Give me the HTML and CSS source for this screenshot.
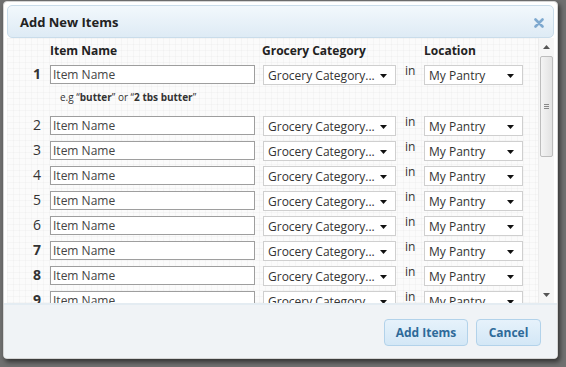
FILE: index.html
```html
<!DOCTYPE html>
<html>
<head>
<meta charset="utf-8">
<link rel="stylesheet" href="styles.css">
</head>
<body>
<div class="dialog">
  <div class="titlebar">
    <span class="title">Add New Items</span>
    <svg class="close" width="10" height="10" viewBox="0 0 10 10"><path d="M1.5 1.5 L8.5 8.5 M8.5 1.5 L1.5 8.5" stroke="#7ea9cf" stroke-width="2.6" stroke-linecap="round"/></svg>
  </div>
  <div class="content">
    <div class="viewport">
      <div class="head">
        <span class="h-name">Item Name</span>
        <span class="h-cat">Grocery Category</span>
        <span class="h-loc">Location</span>
      </div>
      <div class="row">
        <span class="num bold">1</span>
        <input class="name" type="text" placeholder="Item Name">
        <div class="select cat"><span>Grocery Category...</span><svg width="7" height="4" viewBox="0 0 7 4"><path d="M0 0 H7 L3.5 4 Z" fill="#111"/></svg></div>
        <span class="in">in</span>
        <div class="select loc"><span>My Pantry</span><svg width="7" height="4" viewBox="0 0 7 4"><path d="M0 0 H7 L3.5 4 Z" fill="#111"/></svg></div>
      </div>
      <div class="hint">e.g “<b>butter</b>” or “<b>2 tbs butter</b>”</div>
      <div class="row">
        <span class="num">2</span>
        <input class="name" type="text" placeholder="Item Name">
        <div class="select cat"><span>Grocery Category...</span><svg width="7" height="4" viewBox="0 0 7 4"><path d="M0 0 H7 L3.5 4 Z" fill="#111"/></svg></div>
        <span class="in">in</span>
        <div class="select loc"><span>My Pantry</span><svg width="7" height="4" viewBox="0 0 7 4"><path d="M0 0 H7 L3.5 4 Z" fill="#111"/></svg></div>
      </div>
      <div class="row">
        <span class="num">3</span>
        <input class="name" type="text" placeholder="Item Name">
        <div class="select cat"><span>Grocery Category...</span><svg width="7" height="4" viewBox="0 0 7 4"><path d="M0 0 H7 L3.5 4 Z" fill="#111"/></svg></div>
        <span class="in">in</span>
        <div class="select loc"><span>My Pantry</span><svg width="7" height="4" viewBox="0 0 7 4"><path d="M0 0 H7 L3.5 4 Z" fill="#111"/></svg></div>
      </div>
      <div class="row">
        <span class="num">4</span>
        <input class="name" type="text" placeholder="Item Name">
        <div class="select cat"><span>Grocery Category...</span><svg width="7" height="4" viewBox="0 0 7 4"><path d="M0 0 H7 L3.5 4 Z" fill="#111"/></svg></div>
        <span class="in">in</span>
        <div class="select loc"><span>My Pantry</span><svg width="7" height="4" viewBox="0 0 7 4"><path d="M0 0 H7 L3.5 4 Z" fill="#111"/></svg></div>
      </div>
      <div class="row">
        <span class="num">5</span>
        <input class="name" type="text" placeholder="Item Name">
        <div class="select cat"><span>Grocery Category...</span><svg width="7" height="4" viewBox="0 0 7 4"><path d="M0 0 H7 L3.5 4 Z" fill="#111"/></svg></div>
        <span class="in">in</span>
        <div class="select loc"><span>My Pantry</span><svg width="7" height="4" viewBox="0 0 7 4"><path d="M0 0 H7 L3.5 4 Z" fill="#111"/></svg></div>
      </div>
      <div class="row">
        <span class="num">6</span>
        <input class="name" type="text" placeholder="Item Name">
        <div class="select cat"><span>Grocery Category...</span><svg width="7" height="4" viewBox="0 0 7 4"><path d="M0 0 H7 L3.5 4 Z" fill="#111"/></svg></div>
        <span class="in">in</span>
        <div class="select loc"><span>My Pantry</span><svg width="7" height="4" viewBox="0 0 7 4"><path d="M0 0 H7 L3.5 4 Z" fill="#111"/></svg></div>
      </div>
      <div class="row">
        <span class="num bold">7</span>
        <input class="name" type="text" placeholder="Item Name">
        <div class="select cat"><span>Grocery Category...</span><svg width="7" height="4" viewBox="0 0 7 4"><path d="M0 0 H7 L3.5 4 Z" fill="#111"/></svg></div>
        <span class="in">in</span>
        <div class="select loc"><span>My Pantry</span><svg width="7" height="4" viewBox="0 0 7 4"><path d="M0 0 H7 L3.5 4 Z" fill="#111"/></svg></div>
      </div>
      <div class="row">
        <span class="num bold">8</span>
        <input class="name" type="text" placeholder="Item Name">
        <div class="select cat"><span>Grocery Category...</span><svg width="7" height="4" viewBox="0 0 7 4"><path d="M0 0 H7 L3.5 4 Z" fill="#111"/></svg></div>
        <span class="in">in</span>
        <div class="select loc"><span>My Pantry</span><svg width="7" height="4" viewBox="0 0 7 4"><path d="M0 0 H7 L3.5 4 Z" fill="#111"/></svg></div>
      </div>
      <div class="row">
        <span class="num bold">9</span>
        <input class="name" type="text" placeholder="Item Name">
        <div class="select cat"><span>Grocery Category...</span><svg width="7" height="4" viewBox="0 0 7 4"><path d="M0 0 H7 L3.5 4 Z" fill="#111"/></svg></div>
        <span class="in">in</span>
        <div class="select loc"><span>My Pantry</span><svg width="7" height="4" viewBox="0 0 7 4"><path d="M0 0 H7 L3.5 4 Z" fill="#111"/></svg></div>
      </div>
    </div>
    <div class="scrollbar">
      <svg class="arrow" width="7" height="4" viewBox="0 0 7 4"><path d="M0 4 L3.5 0 L7 4 Z" fill="#555"/></svg>
      <div class="thumb">
        <div class="grip"></div>
      </div>
      <div class="track"></div>
      <svg class="arrow" width="7" height="4" viewBox="0 0 7 4"><path d="M0 0 L3.5 4 L7 0 Z" fill="#555"/></svg>
    </div>
  </div>
  <div class="footer">
    <button class="btn btn-add">Add Items</button>
    <button class="btn btn-cancel">Cancel</button>
  </div>
</div>
</body>
</html>
```

FILE: styles.css
```css
html, body {
  margin: 0;
  padding: 0;
}
body {
  width: 566px;
  height: 367px;
  overflow: hidden;
  background: #707070;
  font-family: "Open Sans", "DejaVu Sans", sans-serif;
  color: #333;
}
.dialog {
  box-sizing: border-box;
  margin: 1px 0 0 3px;
  width: 555px;
  height: 358px;
  background: #fff;
  border: 1px solid #d4d4d4;
  border-radius: 4px;
  padding: 3px;
  display: flex;
  flex-direction: column;
  box-shadow: 2px 3px 5px rgba(0, 0, 0, 0.55);
}
.titlebar {
  box-sizing: border-box;
  height: 33px;
  flex: none;
  border: 1px solid #c9dcea;
  border-radius: 5px;
  background: linear-gradient(#f2f8fc, #deebf5);
  display: flex;
  align-items: center;
  justify-content: space-between;
  padding: 0 9px 0 12px;
}
.title {
  font-weight: bold;
  font-size: 13px;
  color: #222;
}
.close {
  display: block;
  margin-top: 2px;
}
.content {
  flex: none;
  height: 265px;
  display: flex;
  overflow: hidden;
}
.viewport {
  flex: 1;
  overflow: hidden;
  background-color: #fbfbfb;
  background-image:
    repeating-linear-gradient(90deg, rgba(0,0,0,0.025) 0 1px, transparent 1px 6px),
    repeating-linear-gradient(0deg, rgba(0,0,0,0.025) 0 1px, transparent 1px 6px);
}
.head {
  height: 27px;
  box-sizing: border-box;
  padding-top: 5px;
  font-weight: bold;
  font-size: 12px;
  line-height: 16px;
  color: #222;
  display: flex;
}
.h-name { margin-left: 43px; width: 212px; }
.h-cat { width: 162px; }
.row {
  display: flex;
  align-items: flex-start;
  height: 25px;
}
.num {
  width: 43px;
  box-sizing: border-box;
  padding-right: 9px;
  text-align: right;
  font-size: 14px;
  line-height: 18px;
  color: #333;
}
.num.bold { font-weight: bold; }
.name {
  box-sizing: border-box;
  width: 205px;
  height: 19px;
  margin: 0;
  border: 1px solid #9e9e9e;
  padding: 0 2px;
  font-family: "Open Sans", "DejaVu Sans", sans-serif;
  font-size: 12px;
  background: #fff;
  outline: none;
}
.name::placeholder {
  color: #444;
  opacity: 1;
}
.select {
  box-sizing: border-box;
  height: 20px;
  border: 1px solid #cfcfcf;
  background: #fff;
  display: flex;
  align-items: center;
  justify-content: space-between;
  padding: 0 8px 0 4px;
  font-size: 12px;
  color: #333;
}
.select svg { display: block; margin-top: 2px; }
.cat { width: 133px; margin-left: 8px; }
.loc { width: 99px; }
.in {
  width: 28px;
  box-sizing: border-box;
  padding-left: 9px;
  font-size: 12px;
  line-height: 12px;
  color: #333;
}
.hint {
  height: 26px;
  box-sizing: border-box;
  padding: 0 0 0 53px;
  font-size: 10px;
  line-height: 14px;
  color: #333;
}
.hint b { font-weight: bold; }
.scrollbar {
  width: 16px;
  flex: none;
  background: #f6f6f6;
  border-left: 1px solid #ececec;
  display: flex;
  flex-direction: column;
  align-items: center;
  padding: 7px 0 6px;
  box-sizing: border-box;
}
.scrollbar .arrow { display: block; flex: none; }
.thumb {
  margin-top: 7px;
  width: 13px;
  height: 101px;
  box-sizing: border-box;
  border: 1px solid #bdbdbd;
  border-radius: 2px;
  background: linear-gradient(90deg, #f4f4f4, #e2e2e2);
  display: flex;
  align-items: center;
  justify-content: center;
  flex: none;
}
.grip {
  width: 5px;
  height: 5px;
  background: repeating-linear-gradient(#888 0 1px, transparent 1px 2px);
}
.track { flex: 1; }
.footer {
  flex: none;
  height: 55px;
  margin: 0 -3px -3px;
  box-sizing: border-box;
  border-top: 2px solid #e4ecf2;
  background: #f0f3f6;
  border-radius: 0 0 3px 3px;
  display: flex;
  justify-content: flex-end;
  align-items: flex-start;
  gap: 8px;
  padding: 14px 16px 0 0;
}
.btn {
  height: 27px;
  box-sizing: border-box;
  border: 1px solid #b2d2ea;
  border-radius: 4px;
  background: linear-gradient(#e6f2fb, #d3e7f6);
  color: #2e6a99;
  font-family: "Open Sans", "DejaVu Sans", sans-serif;
  font-weight: bold;
  font-size: 12px;
  padding: 0;
  margin: 0;
  white-space: nowrap;
  text-align: center;
}
.btn-add { width: 84px; }
.btn-cancel { width: 65px; }
```
